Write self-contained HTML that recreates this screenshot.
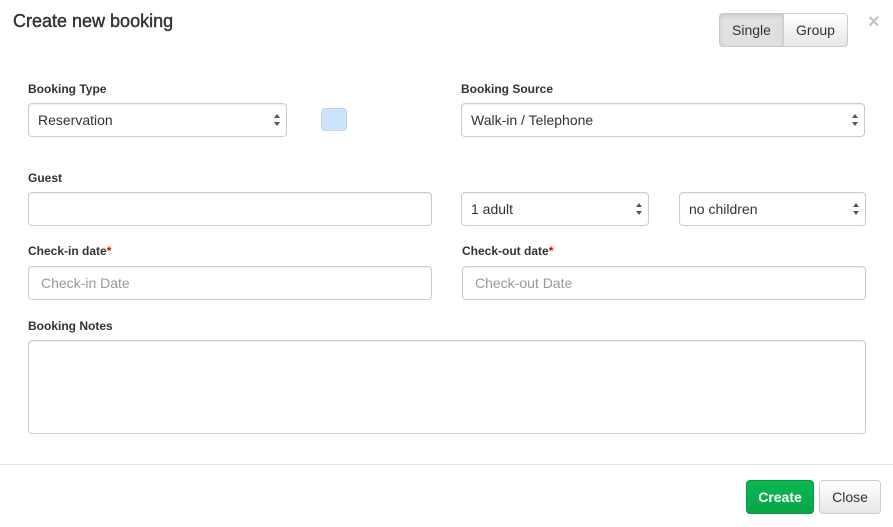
<!DOCTYPE html><html><head><style>
body{margin:0;width:893px;height:527px;background:#fff;font-family:"Liberation Sans",Arial,sans-serif;color:#333;position:relative;overflow:hidden}
.a{position:absolute}
h1{position:absolute;left:13px;top:11px;margin:0;font-size:18px;font-weight:normal;color:#333;-webkit-text-stroke:0.4px #333}
.lbl{position:absolute;font-size:12px;font-weight:bold;color:#333}
.lbl i{color:#d00;font-style:normal}
.in{position:absolute;box-sizing:border-box;border:1px solid #ccc;border-radius:4px;height:34px;font-size:14px;line-height:32px;padding-left:9px;background:#fff;color:#333;box-shadow:inset 0 1px 1px rgba(0,0,0,.07)}
.ph{color:#999;padding-left:12px}
.sel::after{content:"";position:absolute;right:6px;top:10px;border:3.5px solid transparent;border-bottom:4px solid #555;border-top:0}
.sel::before{content:"";position:absolute;right:6px;top:18px;border:3.5px solid transparent;border-top:4px solid #555;border-bottom:0}
.btn{position:absolute;box-sizing:border-box;height:34px;font-size:14px;line-height:32px;text-align:center;border-radius:4px}
</style></head><body>
<h1>Create new booking</h1>
<div class="btn" style="left:719px;top:13px;width:65px;background:#e0e0e0;border:1px solid #c8c8c8;border-radius:4px 0 0 4px;box-shadow:inset 0 2px 4px rgba(0,0,0,.1)">Single</div>
<div class="btn" style="left:783px;top:13px;width:65px;background:linear-gradient(#fff,#e6e6e6);border:1px solid #ccc;border-radius:0 4px 4px 0">Group</div>
<div class="a" style="left:868px;top:11px;font-size:20px;font-weight:bold;color:#c4c4c4">×</div>

<div class="lbl" style="left:28px;top:82px">Booking Type</div>
<div class="in sel" style="left:28px;top:103px;width:259px">Reservation</div>
<div class="a" style="left:321px;top:108px;width:26px;height:23px;box-sizing:border-box;background:#cce4fb;border:1px solid #c4d4e4;border-radius:4px"></div>
<div class="lbl" style="left:461px;top:82px">Booking Source</div>
<div class="in sel" style="left:461px;top:103px;width:404px">Walk-in / Telephone</div>

<div class="lbl" style="left:28px;top:171px">Guest</div>
<div class="in" style="left:28px;top:192px;width:404px"></div>
<div class="in sel" style="left:461px;top:192px;width:188px">1 adult</div>
<div class="in sel" style="left:679px;top:192px;width:187px">no children</div>

<div class="lbl" style="left:28px;top:244px">Check-in date<i>*</i></div>
<div class="in ph" style="left:28px;top:266px;width:404px">Check-in Date</div>
<div class="lbl" style="left:462px;top:244px">Check-out date<i>*</i></div>
<div class="in ph" style="left:462px;top:266px;width:404px">Check-out Date</div>

<div class="lbl" style="left:28px;top:319px">Booking Notes</div>
<div class="in" style="left:28px;top:340px;width:838px;height:94px"></div>

<div class="a" style="left:0;top:464px;width:893px;height:1px;background:#e5e5e5"></div>
<div class="btn" style="left:746px;top:480px;width:68px;background:linear-gradient(#0cb753,#08a648);border:1px solid #079a42;color:#fff;font-weight:bold">Create</div>
<div class="btn" style="left:819px;top:480px;width:62px;background:linear-gradient(#fff,#e6e6e6);border:1px solid #ccc">Close</div>
</body></html>
